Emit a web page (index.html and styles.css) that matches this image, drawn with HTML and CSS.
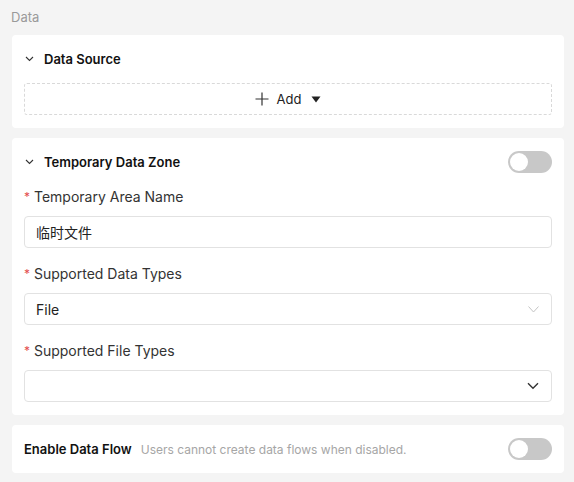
FILE: index.html
```html
<!DOCTYPE html>
<html>
<head>
<meta charset="utf-8">
<link rel="stylesheet" href="styles.css">
</head>
<body>
<div class="page">
  <div class="section-label">Data</div>

  <div class="card">
    <div class="card-head">
      <svg class="chev" width="9" height="6" viewBox="0 0 9 6"><path d="M1 1l3.5 3.5L8 1" fill="none" stroke="#333" stroke-width="1.1"/></svg>
      <span class="title">Data Source</span>
    </div>
    <div class="add-box">
      <svg width="14" height="14" viewBox="0 0 14 14"><path d="M7 0.5v13M0.5 7h13" stroke="#333" stroke-width="1.2"/></svg>
      <span class="add-text">Add</span>
      <svg width="10" height="7" viewBox="0 0 10 7"><path d="M0.5 0.5h9L5 6.5z" fill="#222"/></svg>
    </div>
  </div>

  <div class="card">
    <div class="card-head">
      <svg class="chev" width="9" height="6" viewBox="0 0 9 6"><path d="M1 1l3.5 3.5L8 1" fill="none" stroke="#333" stroke-width="1.1"/></svg>
      <span class="title">Temporary Data Zone</span>
      <span class="toggle"><span class="knob"></span></span>
    </div>
    <div class="field first">
      <div class="label"><span class="req">*</span> Temporary Area Name</div>
      <div class="input">临时文件</div>
    </div>
    <div class="field">
      <div class="label"><span class="req">*</span> Supported Data Types</div>
      <div class="input select">File
        <svg width="11" height="7" viewBox="0 0 11 7"><path d="M0.5 0.5l5 5.5 5-5.5" fill="none" stroke="#c4c4c4" stroke-width="1"/></svg>
      </div>
    </div>
    <div class="field last">
      <div class="label"><span class="req">*</span> Supported File Types</div>
      <div class="input select">
        <svg width="12" height="8" viewBox="0 0 12 8"><path d="M1 1.2l5 5 5-5" fill="none" stroke="#333" stroke-width="1.4"/></svg>
      </div>
    </div>
  </div>

  <div class="card flow">
    <span class="title">Enable Data Flow</span>
    <span class="desc">Users cannot create data flows when disabled.</span>
    <span class="toggle"><span class="knob"></span></span>
  </div>
</div>
</body>
</html>
```

FILE: styles.css
```css
* { box-sizing: border-box; }
html, body { margin: 0; padding: 0; background: #f4f4f4; }
body {
  font-family: Inter, "Noto Sans CJK SC", sans-serif;
  color: #222;
}
.page {
  width: 564px;
  padding: 8px 0 0 12px;
  display: flex;
  flex-direction: column;
}
.section-label {
  font-size: 13px;
  color: #9a9a9a;
  margin-left: -1px;
  line-height: 18px;
  margin-bottom: 9px;
}
.card {
  background: #fff;
  border-radius: 4px;
  padding: 0 12px;
  margin-bottom: 10px;
}
.card-head {
  display: flex;
  align-items: center;
  height: 48px;
}
.chev { margin-left: 1px; margin-right: 10px; }
.title {
  font-size: 13px;
  font-weight: 600;
  color: #111;
}
.card-head .toggle { margin-left: auto; }
.add-box {
  height: 32px;
  border: 1px dashed #d9d9d9;
  border-radius: 3px;
  display: flex;
  align-items: center;
  justify-content: center;
  gap: 8px;
  margin-bottom: 13px;
  font-size: 13px;
  color: #222;
}
.add-text { margin-right: 2px; }
.toggle {
  width: 44px;
  height: 22px;
  border-radius: 11px;
  background: #c8c8c8;
  position: relative;
  flex-shrink: 0;
}
.knob {
  position: absolute;
  left: 2px;
  top: 2px;
  width: 18px;
  height: 18px;
  border-radius: 50%;
  background: #fff;
}
.field { display: flex; flex-direction: column; }
.field.first { margin-top: 2px; }
.label {
  font-size: 14px;
  color: #333;
  line-height: 18px;
  margin-bottom: 10px;
}
.req { color: #e34d4d; font-size: 12px; vertical-align: 1px; }
.input {
  height: 32px;
  border: 1px solid #e2e2e2;
  border-radius: 4px;
  padding: 0 11px;
  font-size: 14px;
  color: #222;
  display: flex;
  align-items: center;
  margin-bottom: 17px;
}
.select { justify-content: space-between; }
.select svg { margin-left: auto; margin-right: 1px; }
.field.last .input { margin-bottom: 13px; }
.card.flow {
  display: flex;
  align-items: center;
  height: 48px;
}
.desc {
  font-size: 12px;
  color: #a6a6a6;
  margin-left: 9px;
}
.card.flow .toggle { margin-left: auto; }
```
